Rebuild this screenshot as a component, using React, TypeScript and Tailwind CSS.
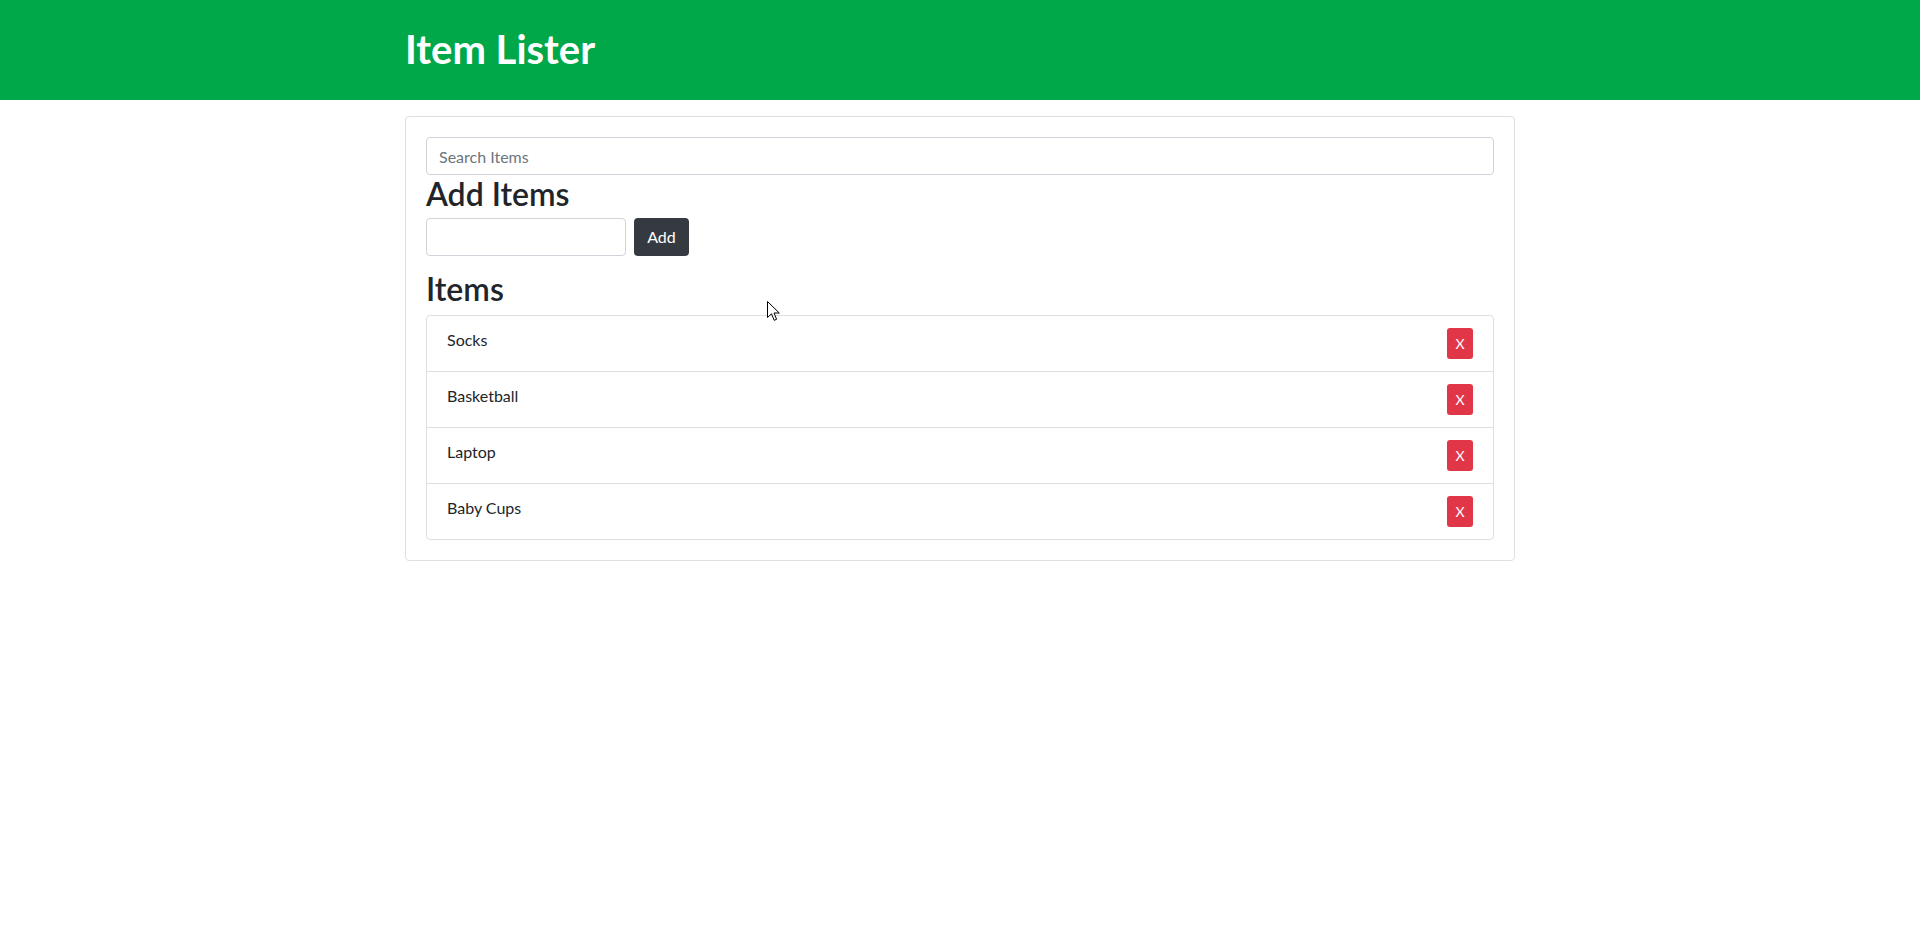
import { useState } from 'react';

const font = { fontFamily: 'Lato, "Open Sans", "Noto Sans", Arial, sans-serif' };

const initialItems = ['Socks', 'Basketball', 'Laptop', 'Baby Cups'];

export default function App() {
  const [items, setItems] = useState(initialItems);
  const [search, setSearch] = useState('');
  const [newItem, setNewItem] = useState('');

  const addItem = () => {
    if (!newItem.trim()) return;
    setItems([...items, newItem.trim()]);
    setNewItem('');
  };

  const visible = items.filter((i) => i.toLowerCase().includes(search.toLowerCase()));

  return (
    <div className="relative min-h-[937px] bg-white text-[#212529]" style={font}>
      <header className="h-[100px] bg-[#00a84a]">
        <div className="mx-auto flex h-full w-[1110px] items-center pb-[2px]">
          <h1 className="text-[40px] font-bold leading-[48px] text-white">Item Lister</h1>
        </div>
      </header>

      <main className="mx-auto mt-4 w-[1110px] rounded border border-[#dfdfdf] p-5">
        <input
          type="text"
          value={search}
          onChange={(e) => setSearch(e.target.value)}
          placeholder="Search Items"
          className="block h-[38px] w-full rounded border border-[#ced4da] px-3 text-base text-[#495057] placeholder:text-[#6c757d] focus:outline-none"
        />

        <h2 className="text-[32px] font-semibold leading-[38px]">Add Items</h2>
        <div className="mt-[5px] flex gap-2">
          <input
            type="text"
            value={newItem}
            onChange={(e) => setNewItem(e.target.value)}
            className="h-[38px] w-[200px] rounded border border-[#ced4da] px-3 text-base focus:outline-none"
          />
          <button
            onClick={addItem}
            className="h-[38px] w-[55px] rounded bg-[#343a40] text-base text-white"
          >
            Add
          </button>
        </div>

        <h2 className="mt-[14px] mb-[7px] text-[32px] font-semibold leading-[38px]">Items</h2>
        <ul className="rounded border border-[#dfdfdf]">
          {visible.map((item, i) => (
            <li
              key={item + i}
              className="flex items-start justify-between border-b border-[#dfdfdf] px-5 py-3 last:border-b-0"
            >
              <span className="text-base leading-6">{item}</span>
              <button
                onClick={() => setItems(items.filter((x) => x !== item))}
                className="h-[31px] w-[26px] rounded-[3px] bg-[#e13548] text-sm leading-[21px] text-white"
              >
                X
              </button>
            </li>
          ))}
        </ul>
      </main>

      <svg
        className="pointer-events-none absolute left-[767px] top-[301px]"
        width="13"
        height="21"
        viewBox="0 0 13 21"
      >
        <path
          d="M0.5 0.5 L0.5 16.5 L4.5 12.8 L7.2 19.3 L9.6 18.3 L7 12 L12.3 12 Z"
          fill="white"
          stroke="black"
          strokeWidth="1"
          strokeLinejoin="round"
        />
      </svg>
    </div>
  );
}
